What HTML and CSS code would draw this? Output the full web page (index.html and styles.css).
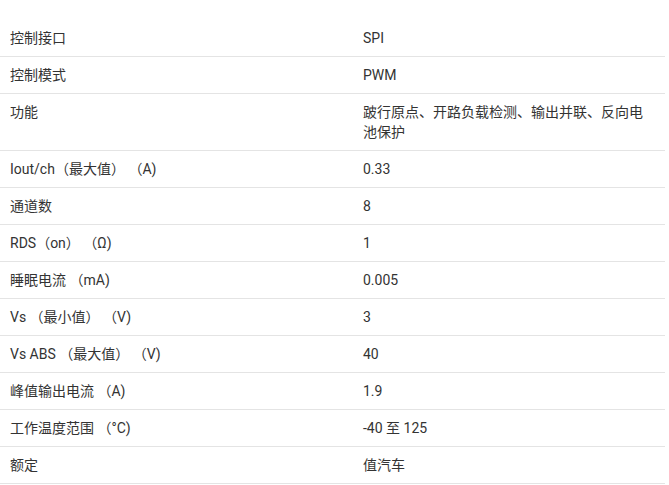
FILE: index.html
```html
<!DOCTYPE html>
<html lang="zh-CN">
<head>
<meta charset="utf-8">
<link rel="stylesheet" href="styles.css">
</head>
<body>
<table class="spec">
  <tbody>
    <tr><td class="k">控制接口</td><td class="v">SPI</td></tr>
    <tr><td class="k">控制模式</td><td class="v">PWM</td></tr>
    <tr><td class="k">功能</td><td class="v">跛行原点、开路负载检测、输出并联、反向电池保护</td></tr>
    <tr><td class="k">Iout/ch（最大值） （A)</td><td class="v">0.33</td></tr>
    <tr><td class="k">通道数</td><td class="v">8</td></tr>
    <tr><td class="k">RDS（on） （Ω)</td><td class="v">1</td></tr>
    <tr><td class="k">睡眠电流 （mA)</td><td class="v">0.005</td></tr>
    <tr><td class="k">Vs （最小值） （V)</td><td class="v">3</td></tr>
    <tr><td class="k">Vs ABS （最大值） （V)</td><td class="v">40</td></tr>
    <tr><td class="k">峰值输出电流 （A)</td><td class="v">1.9</td></tr>
    <tr><td class="k">工作温度范围 （°C)</td><td class="v">-40 至 125</td></tr>
    <tr><td class="k">额定</td><td class="v">值汽车</td></tr>
  </tbody>
</table>
</body>
</html>
```
FILE: styles.css
```css
html, body {
  margin: 0;
  padding: 0;
  background: #ffffff;
}
body {
  font-family: Roboto, "Noto Sans CJK SC", sans-serif;
  font-size: 14px;
  line-height: 20px;
  color: #333333;
}
.spec {
  margin-top: 20px;
  width: 665px;
  border-collapse: collapse;
  table-layout: fixed;
}
.spec td {
  padding: 8px 10px;
  border-bottom: 1px solid #e4e4e4;
  vertical-align: top;
  text-align: left;
}
.spec .k {
  width: 333px;
}
```
